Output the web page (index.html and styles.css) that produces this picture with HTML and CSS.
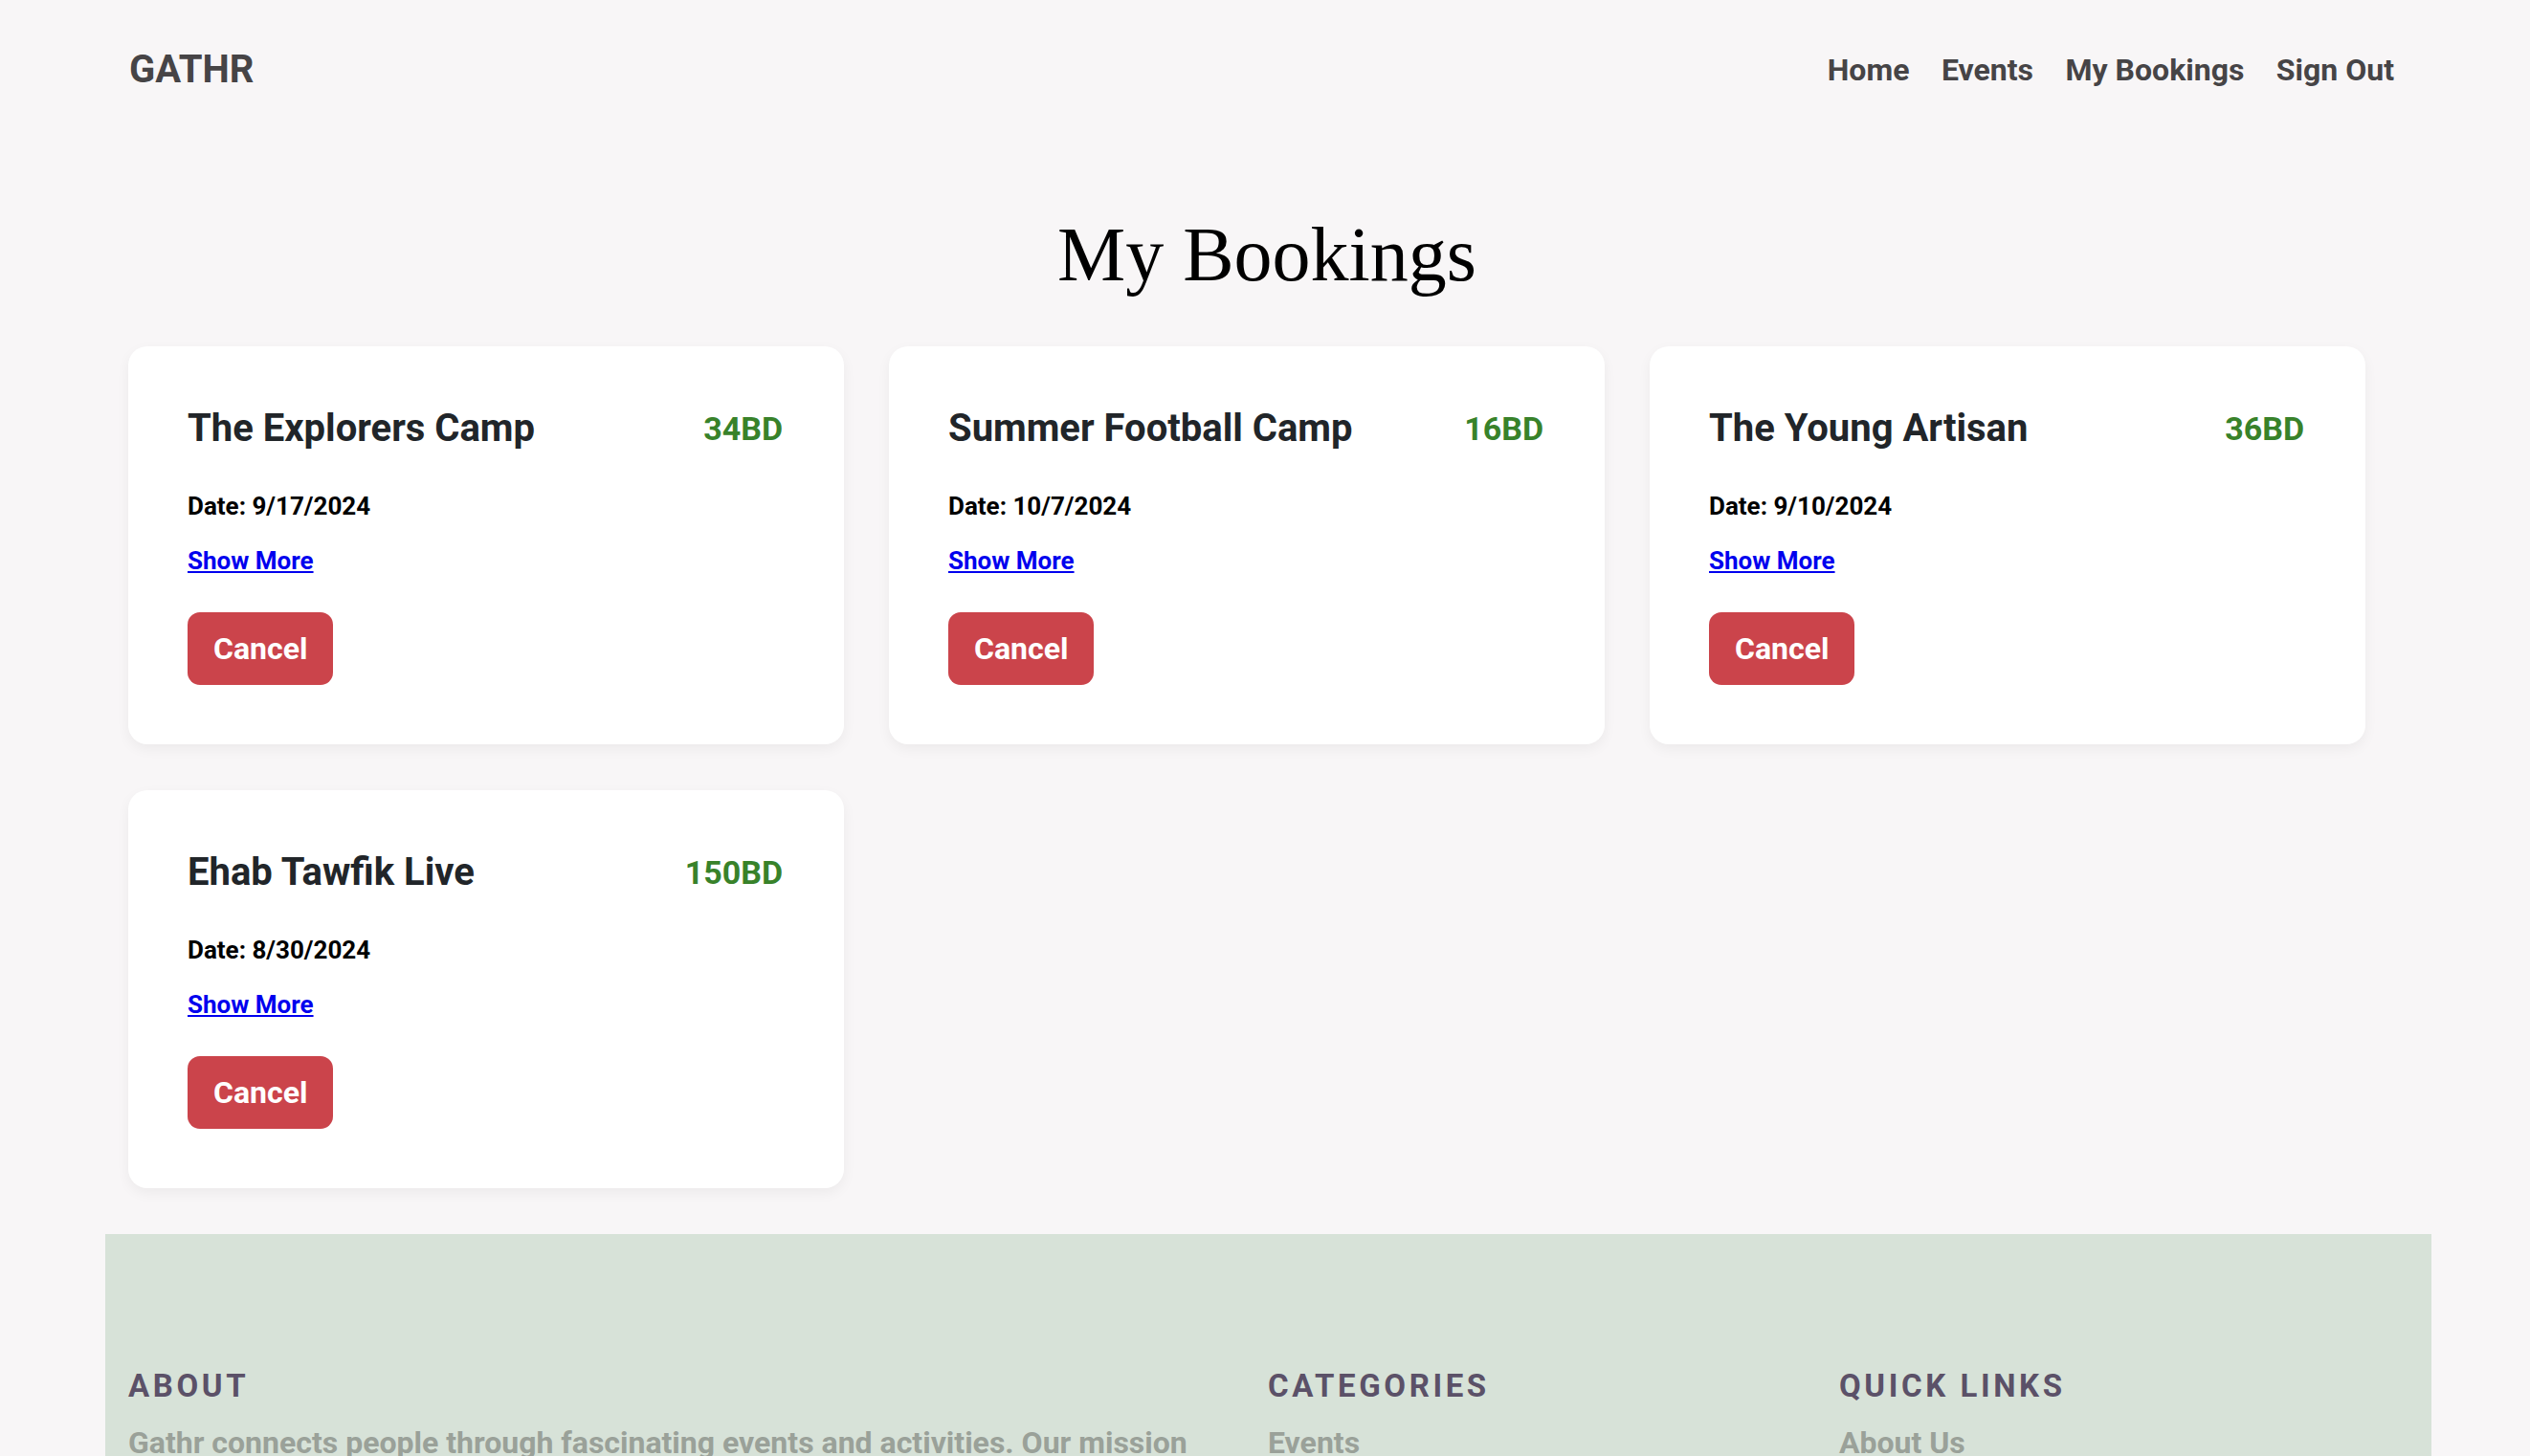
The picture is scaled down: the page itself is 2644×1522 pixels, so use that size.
FILE: index.html
```html
<!DOCTYPE html>
<html lang="en">
<head>
<meta charset="utf-8">
<title>GATHR - My Bookings</title>
<link rel="stylesheet" href="styles.css">
</head>
<body>
<header class="site-header">
  <a class="brand" href="#">GATHR</a>
  <nav class="nav">
    <a href="#">Home</a>
    <a href="#">Events</a>
    <a href="#">My Bookings</a>
    <a href="#">Sign Out</a>
  </nav>
</header>

<main class="content">
  <h1 class="page-title">My Bookings</h1>
  <div class="bookings">
    <div class="card">
      <div class="card-head">
        <h2 class="card-title">The Explorers Camp</h2>
        <span class="price">34BD</span>
      </div>
      <p class="date">Date: 9/17/2024</p>
      <a class="more" href="#">Show More</a>
      <button class="btn-cancel">Cancel</button>
    </div>
    <div class="card">
      <div class="card-head">
        <h2 class="card-title">Summer Football Camp</h2>
        <span class="price">16BD</span>
      </div>
      <p class="date">Date: 10/7/2024</p>
      <a class="more" href="#">Show More</a>
      <button class="btn-cancel">Cancel</button>
    </div>
    <div class="card">
      <div class="card-head">
        <h2 class="card-title">The Young Artisan</h2>
        <span class="price">36BD</span>
      </div>
      <p class="date">Date: 9/10/2024</p>
      <a class="more" href="#">Show More</a>
      <button class="btn-cancel">Cancel</button>
    </div>
    <div class="card">
      <div class="card-head">
        <h2 class="card-title">Ehab Tawfik Live</h2>
        <span class="price">150BD</span>
      </div>
      <p class="date">Date: 8/30/2024</p>
      <a class="more" href="#">Show More</a>
      <button class="btn-cancel">Cancel</button>
    </div>
  </div>
</main>

<footer class="site-footer">
  <div class="footer-grid">
    <div class="footer-col">
      <h3 class="footer-heading">ABOUT</h3>
      <p class="footer-text">Gathr connects people through fascinating events and activities. Our mission is to bring communities together and help everyone discover new experiences.</p>
    </div>
    <div class="footer-col">
      <h3 class="footer-heading">CATEGORIES</h3>
      <ul class="footer-links">
        <li><a href="#">Events</a></li>
        <li><a href="#">Camps</a></li>
        <li><a href="#">Concerts</a></li>
      </ul>
    </div>
    <div class="footer-col">
      <h3 class="footer-heading">QUICK LINKS</h3>
      <ul class="footer-links">
        <li><a href="#">About Us</a></li>
        <li><a href="#">Contact Us</a></li>
        <li><a href="#">Privacy Policy</a></li>
      </ul>
    </div>
  </div>
</footer>
</body>
</html>
```

FILE: styles.css
```css
* { box-sizing: border-box; }

body {
  margin: 0;
  background: #f8f6f7;
  font-family: Roboto, "Liberation Sans", sans-serif;
  font-weight: 700;
  color: #212529;
}

.site-header {
  height: 146px;
  display: flex;
  align-items: center;
  justify-content: space-between;
  padding: 0 142px 0 135px;
}

.brand {
  font-size: 40px;
  line-height: 48px;
  color: #464446;
  text-decoration: none;
  font-weight: 700;
}

.nav {
  display: flex;
  gap: 33.5px;
}

.nav a {
  font-size: 32px;
  line-height: 48px;
  color: #464446;
  text-decoration: none;
}

.content {
  padding-left: 134px;
}

.page-title {
  margin: 74px 0 50px;
  padding-right: 130px;
  font-family: "Liberation Serif", "Times New Roman", serif;
  font-weight: 400;
  font-size: 80px;
  line-height: 92px;
  color: #000;
  text-align: center;
}

.bookings {
  display: grid;
  grid-template-columns: repeat(3, 748px);
  gap: 48px 47px;
}

.card {
  background: #fff;
  border-radius: 20px;
  padding: 62px;
  box-shadow: 0 5px 14px rgba(0, 0, 0, 0.05);
  display: flex;
  flex-direction: column;
  align-items: flex-start;
}

.card-head {
  align-self: stretch;
  display: flex;
  justify-content: space-between;
  align-items: center;
}

.card-title {
  margin: 0;
  font-size: 40px;
  line-height: 48px;
  font-weight: 700;
  color: #212529;
}

.price {
  font-size: 34px;
  line-height: 48px;
  color: #38822a;
  margin-right: 2px;
}

.date {
  margin: 38px 0 0;
  font-size: 26px;
  line-height: 39px;
  color: #000;
}

.more {
  margin-top: 18px;
  font-size: 26px;
  line-height: 39px;
  color: #0000ee;
  text-decoration: underline;
}

.btn-cancel {
  margin-top: 34px;
  font-family: Roboto, "Liberation Sans", sans-serif;
  font-weight: 700;
  font-size: 32px;
  line-height: 48px;
  padding: 14px 27px;
  border: 0;
  border-radius: 13px;
  background: #cb444b;
  color: #fff;
}

.site-footer {
  margin: 48px 103px 0 110px;
  background: #d7e2d8;
  padding: 139px 24px 80px;
}

.footer-grid {
  display: grid;
  grid-template-columns: 1131px 537px 537px;
  column-gap: 60px;
}

.footer-heading {
  margin: 0;
  font-size: 33px;
  line-height: 40px;
  letter-spacing: 3.6px;
  color: #5b5168;
  font-weight: 700;
}

.footer-text {
  margin: 15px 0 0;
  font-size: 32px;
  line-height: 48px;
  color: #9aa199;
}

.footer-links {
  list-style: none;
  margin: 15px 0 0;
  padding: 0;
}

.footer-links a {
  font-size: 32px;
  line-height: 48px;
  color: #9aa199;
  text-decoration: none;
}
```
